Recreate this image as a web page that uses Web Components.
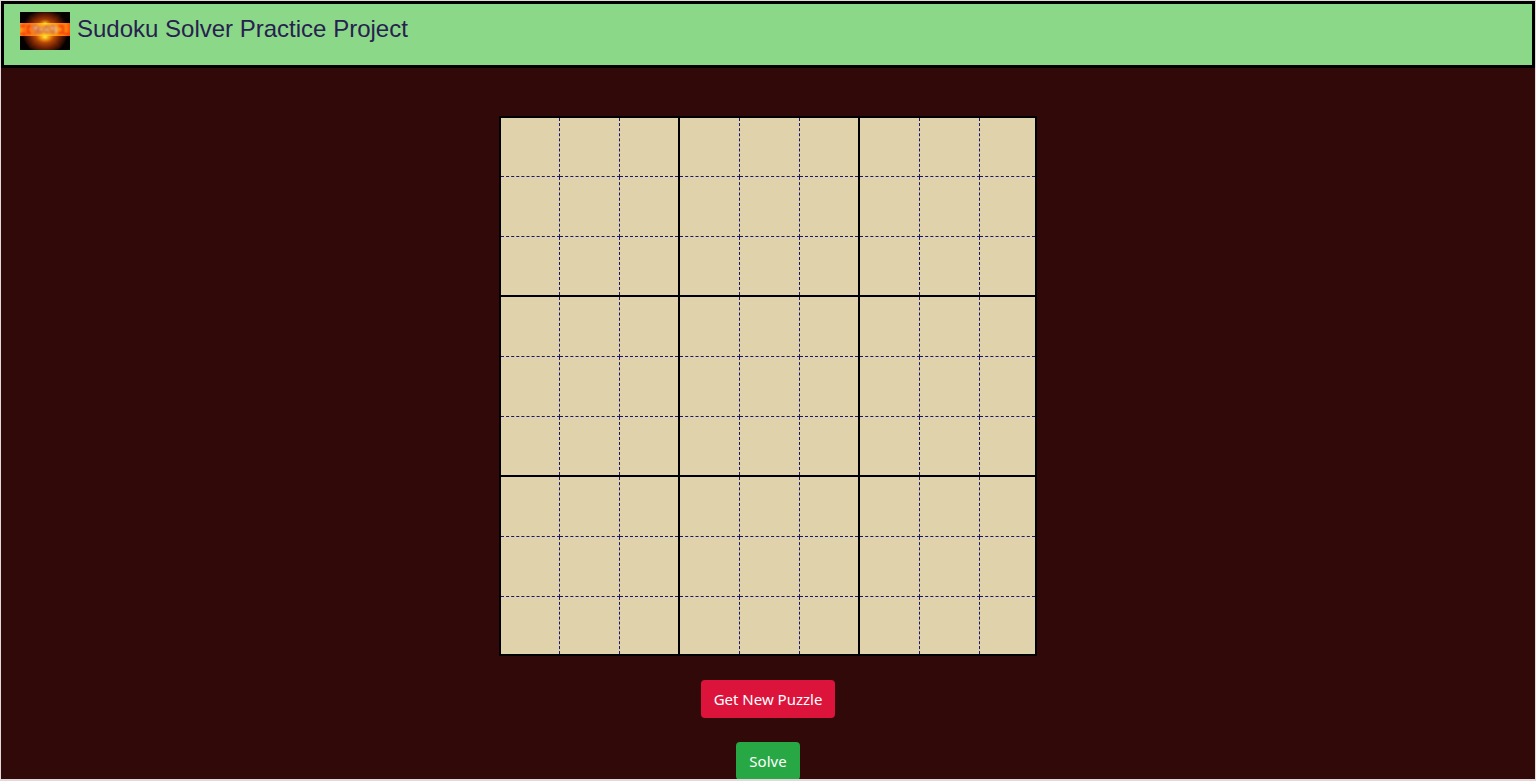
<!DOCTYPE html>
<html lang="en">
<head>
<meta charset="utf-8">
<title>Sudoku Solver Practice Project</title>
<style>
  body { margin: 0; background: #e2dada; font-family: "Liberation Sans", Arial, sans-serif; }
</style>
</head>
<body>
<sudoku-app></sudoku-app>
<script>
const define = (name, html, setup) => customElements.define(name, class extends HTMLElement {
  constructor() {
    super();
    this.attachShadow({ mode: "open" }).innerHTML = html;
    if (setup) setup(this.shadowRoot);
  }
});

define("sudoku-logo", `
<style>:host { display: block; width: 50px; height: 38px; } svg { display: block; }</style>
<svg width="50" height="38" viewBox="0 0 50 38" role="img" aria-label="Sudoku logo">
  <defs>
    <radialGradient id="glow" gradientUnits="userSpaceOnUse" cx="25" cy="20" r="23">
      <stop offset="0" stop-color="#ffb828"/><stop offset=".35" stop-color="#d65e06"/>
      <stop offset=".7" stop-color="#702004"/><stop offset="1" stop-color="#080202"/>
    </radialGradient>
    <linearGradient id="band">
      <stop offset="0" stop-color="#ffa018"/><stop offset=".08" stop-color="#ff7010"/>
      <stop offset=".3" stop-color="#ff8a10"/><stop offset=".5" stop-color="#ffd820"/>
      <stop offset=".75" stop-color="#ff9410"/><stop offset=".92" stop-color="#ff8010"/>
      <stop offset="1" stop-color="#f85004"/>
    </linearGradient>
    <radialGradient id="flare"><stop offset="0" stop-color="#fff040"/><stop offset="1" stop-color="#ff8a00" stop-opacity="0"/></radialGradient>
    <filter id="soft" x="-10%" y="-30%" width="120%" height="160%"><feGaussianBlur stdDeviation="1"/></filter>
  </defs>
  <rect width="50" height="38" fill="#050101"/>
  <circle cx="25" cy="19" r="23" fill="url(#glow)"/>
  <g stroke="#e06010" stroke-width=".8" opacity=".25" filter="url(#soft)">
    <path d="M25 19 41 1M25 19 9 3M25 19 40 36M25 19 10 36"/>
  </g>
  <rect y="11" width="50" height="13" fill="url(#band)"/>
  <g filter="url(#soft)" fill="none" stroke-width="2">
    <path stroke="#f03808" d="M11 14H8v7h3M38 14h5v7h-5M0 14h5M0 22h6M44 22h6"/>
    <path stroke="#d87048" d="M17 14h-4v3h4v4h-4M19 14v7h3v-7M25 14v7h3v-7zM31 14v7h3v-7z"/>
    <path stroke="#e4c8a8" stroke-width="1.6" d="M14 16h3M20 17h2M26 18h2M31 16h3M36 15v5"/>
  </g>
  <ellipse cx="25" cy="25" rx="9" ry="6" fill="url(#flare)"/>
  <ellipse cx="25" cy="11" rx="6" ry="4" fill="url(#flare)" opacity=".7"/>
</svg>`);

define("site-header", `
<style>
  :host { display: flex; align-items: flex-start; gap: 7px; box-sizing: border-box; min-height: 67px;
    padding: 8px 16px; border: 3px solid #000; background: #8bd888; color: #27214f; }
  h1 { margin: 3px 0 0; font-size: 24px; font-weight: 400; line-height: 28px; }
</style>
<sudoku-logo></sudoku-logo>
<h1><slot></slot></h1>`);

define("sudoku-board", `
<style>
  :host { display: block; }
  table { border-collapse: collapse; table-layout: fixed; width: 538px; border: 2px solid #000; background: #e0d2ab; }
  col:not(:last-child) { width: 60px; }
  col:first-child { width: 59px; }
  td { box-sizing: border-box; height: 60px; padding: 0; border: 0; }
  tr:first-child td, tr:last-child td { height: 59px; }
  td:not(:last-child) { border-right: 1px dashed #191970; }
  tr:not(:last-child) td { border-bottom: 1px dashed #191970; }
  td:nth-child(3n):not(:last-child) { border-right: 2px solid #000; }
  tr:nth-child(3n):not(:last-child) td { border-bottom: 2px solid #000; }
</style>
<table aria-label="Sudoku board"><colgroup></colgroup><tbody></tbody></table>`, root => {
  const cols = root.querySelector("colgroup");
  const body = root.querySelector("tbody");
  for (let r = 0; r < 9; r++) {
    cols.append(document.createElement("col"));
    const row = body.insertRow();
    for (let c = 0; c < 9; c++) row.insertCell();
  }
});

define("action-button", `
<style>
  :host { display: block; }
  button { display: block; margin: 0; padding: 7px 13px; border: 0; border-radius: 4px;
    background: var(--fill); color: #fff; font: 400 15px/24px "Noto Sans", "Open Sans", sans-serif; }
</style>
<button type="button"><slot></slot></button>`);

define("sudoku-app", `
<style>
  :host { display: flex; flex-direction: column; box-sizing: border-box; height: 100vh; padding: 1px 1px 2px; }
  main { flex: 1; min-height: 0; overflow: hidden; display: flex; flex-direction: column; align-items: center;
    gap: 24px; padding-top: 48px; background: #310909; }
  main > * { flex: none; }
  .new { --fill: #dc143c; }
  .solve { --fill: #28a745; }
</style>
<site-header>Sudoku Solver Practice Project</site-header>
<main>
  <sudoku-board></sudoku-board>
  <action-button class="new">Get New Puzzle</action-button>
  <action-button class="solve">Solve</action-button>
</main>`);
</script>
</body>
</html>
